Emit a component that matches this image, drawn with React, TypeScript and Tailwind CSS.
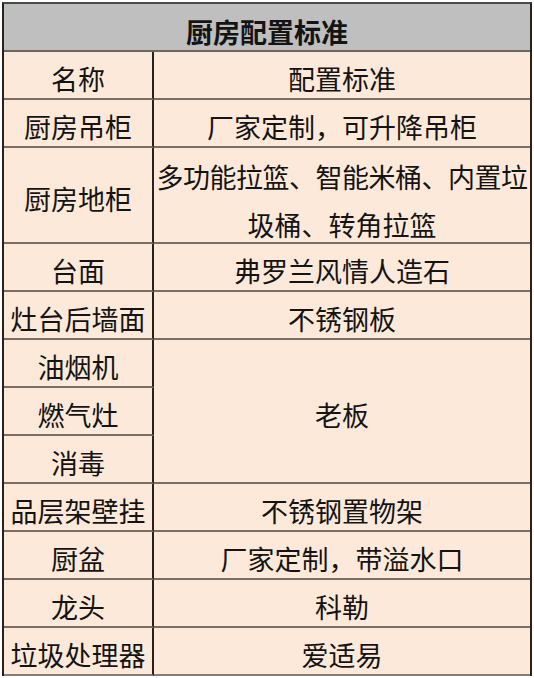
const rows: { name: string; spec?: string; tall?: boolean }[] = [
  { name: "名称", spec: "配置标准" },
  { name: "厨房吊柜", spec: "厂家定制，可升降吊柜" },
  { name: "厨房地柜", tall: true },
  { name: "台面", spec: "弗罗兰风情人造石" },
  { name: "灶台后墙面", spec: "不锈钢板" },
];

const tail: { name: string; spec: string }[] = [
  { name: "品层架壁挂", spec: "不锈钢置物架" },
  { name: "厨盆", spec: "厂家定制，带溢水口" },
  { name: "龙头", spec: "科勒" },
  { name: "垃圾处理器", spec: "爱适易" },
];

const left =
  "flex items-center justify-center pt-[12px] border-r-2 border-r-[#2a211c] border-b-2 border-b-[#7b6d61] whitespace-nowrap";
const right =
  "flex items-center justify-center pt-[12px] border-b-2 border-b-[#7b6d61] whitespace-nowrap";

export default function App() {
  return (
    <div
      className="min-h-screen bg-white pt-[2px] pl-[2px] text-[#141414]"
      style={{ fontFamily: '"Liberation Serif", "Noto Sans CJK SC", serif' }}
    >
      <div className="w-[530px] border-t-2 border-t-[#4a4a4a] border-x-2 border-x-[#2a211c] bg-[#fde9d9] text-[27px] leading-[1.2]">
        {/* 表头 */}
        <div className="h-[48px] flex items-center justify-center pt-[14px] bg-[#bfbfbf] border-b-2 border-b-[#6e6660] font-bold">
          厨房配置标准
        </div>

        <div className="grid grid-cols-[150px_376px] auto-rows-[48px]">
          {rows.map((r) =>
            r.tall ? (
              <div key={r.name} className="contents">
                <div className={`${left} row-span-2`}>{r.name}</div>
                <div className="row-span-2 flex flex-col items-center justify-center pt-[16px] border-b-2 border-b-[#7b6d61] leading-[48px] whitespace-nowrap">
                  <span className="tracking-[-0.5px]">多功能拉篮、智能米桶、内置垃</span>
                  <span>圾桶、转角拉篮</span>
                </div>
              </div>
            ) : (
              <div key={r.name} className="contents">
                <div className={left}>{r.name}</div>
                <div className={right}>{r.spec}</div>
              </div>
            )
          )}

          {/* 老板 合并三行 */}
          <div className={left}>油烟机</div>
          <div className={`${right} row-span-3`}>老板</div>
          <div className={left}>燃气灶</div>
          <div className={left}>消毒</div>

          {tail.map((r, i) => {
            const last = i === tail.length - 1;
            return (
              <div key={r.name} className="contents">
                <div className={last ? `${left} border-b-[#7f7f7f]!` : left}>{r.name}</div>
                <div className={last ? `${right} border-b-[#7f7f7f]!` : right}>{r.spec}</div>
              </div>
            );
          })}
        </div>
      </div>
    </div>
  );
}
